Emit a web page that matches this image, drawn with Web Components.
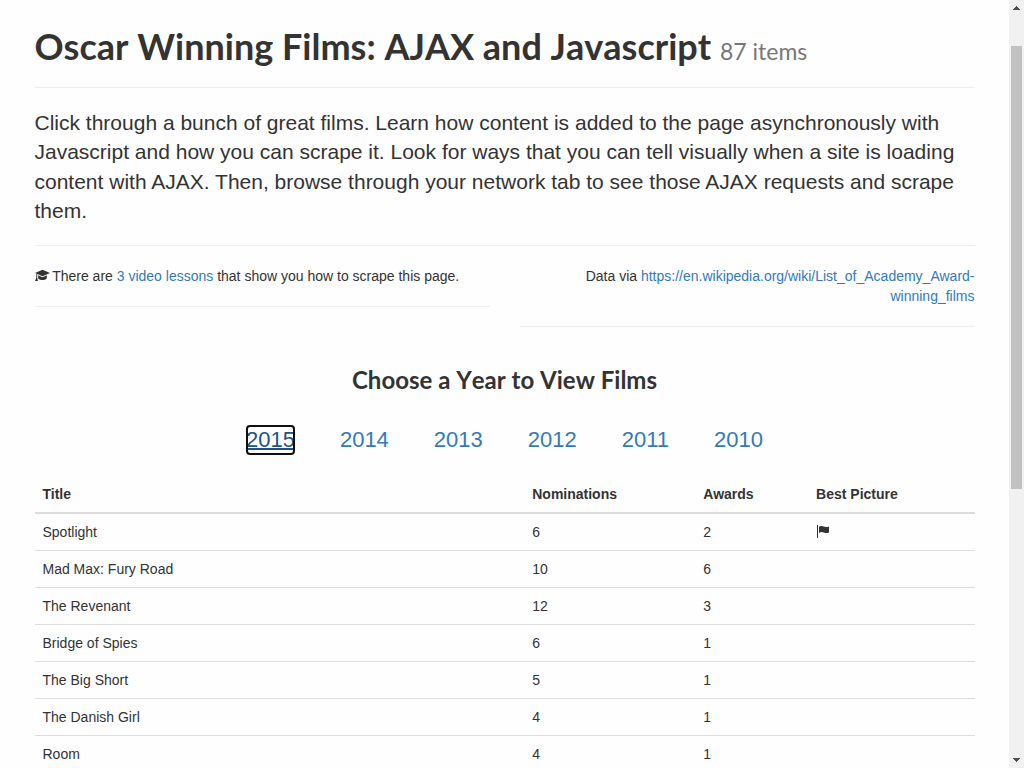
<!DOCTYPE html>
<html lang="en">
<head>
<meta charset="utf-8">
<title>Oscar Winning Films: AJAX and Javascript</title>
<style>
  body {
    margin: 0;
    background: #fefefe;
    color: #333;
    font: 14px/20px "Liberation Sans", Arial, sans-serif;
  }
</style>
</head>
<body>
<films-page></films-page>

<template id="films-page-template">
  <style>
    :host { display: flex; height: 100vh; overflow: hidden; }
    main { flex: 1; min-width: 0; overflow: hidden; }
    .container { max-width: 940px; margin: 0 auto; padding: 25px 15px 0; }
    .lead { margin: 20px 0 19px; font-size: 21px; line-height: 1.4; }
    hr { margin: 19px 0 20px; border: 0; border-top: 1px solid #eee; }
    .notes { display: grid; grid-template-columns: 1fr 1fr; gap: 30px; align-items: start; }
    a { color: #337ab7; text-decoration: none; }
    h3 {
      margin: 40px 0 10px;
      font: bold 24px/26px Lato, sans-serif;
      font-kerning: none;
      text-align: center;
    }
  </style>
  <main>
    <div class="container">
      <page-header>Oscar Winning Films: AJAX and Javascript <span slot="count">87 items</span></page-header>
      <p class="lead">Click through a bunch of great films. Learn how content is added to the page asynchronously with Javascript and how you can scrape it. Look for ways that you can tell visually when a site is loading content with AJAX. Then, browse through your network tab to see those AJAX requests and scrape them.</p>
      <hr>
      <div class="notes">
        <page-note><page-icon name="cap"></page-icon> There are <a href="#lessons">3 video lessons</a> that show you how to scrape this page.</page-note>
        <page-note align="right">Data via <a href="#source">https://en.wikipedia.org/wiki/List_of_Academy_Award-winning_films</a></page-note>
      </div>
      <h3>Choose a Year to View Films</h3>
      <year-picker></year-picker>
      <film-table></film-table>
    </div>
  </main>
  <scroll-bar></scroll-bar>
</template>

<template id="page-header-template">
  <style>
    :host { display: block; padding-bottom: 20px; border-bottom: 1px solid #eee; }
    h1 { margin: 0; font: bold 36px/42px Lato, sans-serif; font-kerning: none; }
    small { font-size: 23px; font-weight: 400; line-height: 1; color: #777; }
  </style>
  <h1><slot></slot><small><slot name="count"></slot></small></h1>
</template>

<template id="page-note-template">
  <style>
    :host { display: block; padding-bottom: 20px; border-bottom: 1px solid #eee; }
    :host([align="right"]) { text-align: right; }
    p { margin: 0; }
  </style>
  <p><slot></slot></p>
</template>

<template id="year-picker-template">
  <style>
    :host { display: block; padding: 22px 0 21px; }
    nav { display: flex; justify-content: center; gap: 45px; }
    a { font-size: 22px; line-height: 30px; color: #337ab7; text-decoration: none; }
    a[aria-current] {
      color: #23527c;
      text-decoration: underline 2px;
      outline: 2px solid #101010;
      outline-offset: -2px;
      border-radius: 4px;
    }
  </style>
  <nav aria-label="Year"></nav>
</template>

<template id="film-table-template">
  <style>
    :host { display: block; }
    table { width: 100%; table-layout: fixed; border-collapse: separate; border-spacing: 0; }
    .title { width: 52.1%; }
    .nominations { width: 18.2%; }
    .awards { width: 12%; }
    th, td { padding: 8px; text-align: left; border-bottom: 1px solid #ddd; }
    th { border-bottom-width: 2px; }
  </style>
  <table>
    <colgroup><col class="title"><col class="nominations"><col class="awards"><col></colgroup>
    <thead><tr><th>Title</th><th>Nominations</th><th>Awards</th><th>Best Picture</th></tr></thead>
    <tbody></tbody>
  </table>
</template>

<template id="scroll-bar-template">
  <style>
    :host { display: flex; flex-direction: column; width: 15px; background: #f1f1f1; }
    svg { display: block; width: 15px; height: 15px; fill: #505050; }
    .track { flex: 1; display: grid; grid-template-rows: 31fr 443fr 264fr; padding: 0 2px; }
    .thumb { grid-row: 2; background: #c1c1c1; }
  </style>
  <svg viewBox="0 0 15 15"><path d="M7 6h1v1h1v1h1v1h1v1H4V9h1V8h1V7h1z"/></svg>
  <div class="track"><div class="thumb"></div></div>
  <svg viewBox="0 0 15 15"><path d="M4 5h7v1h-1v1H9v1H8v1H7V8H6V7H5V6H4z"/></svg>
</template>

<script>
  const define = (name, setup) => customElements.define(name, class extends HTMLElement {
    constructor() {
      super();
      const root = this.attachShadow({ mode: 'open' });
      const template = document.getElementById(name + '-template');
      if (template) root.append(template.content.cloneNode(true));
    }
    connectedCallback() {
      if (setup) setup(this, this.shadowRoot);
    }
  });

  const icons = {
    cap: '<path d="M0 4 7.500.8 15 4 7.500 7.200z"/><path d="M3.200 6.300 7.500 8.200l4.300-1.900v3.200c-1.200 1-2.700 1.500-4.300 1.500s-3.100-.5-4.300-1.500z"/><path d="M1.300 5h.9v3.700l.8 3.300H0l1.300-3.300z"/>',
    flag: '<path d="M1 0h1v13H1z"/><path d="M3 1.700c1.800-1.300 3.300-.8 4.900-.1 1.600.7 3.100.6 5.100-.2v6c-2 1-3.500.8-5.100.1-1.600-.6-3.100-.8-4.900.5z"/>'
  };
  define('page-icon', (host, root) => {
    root.innerHTML = `<style>
      :host { display: inline-block; width: 14px; height: 14px; vertical-align: -2px; }
      svg { display: block; width: 100%; height: 100%; fill: currentColor; overflow: visible; }
    </style><svg viewBox="0 0 14 14" aria-hidden="true">${icons[host.getAttribute('name')]}</svg>`;
  });
  define('page-header');
  define('page-note');
  define('year-picker', (host, root) => {
    root.querySelector('nav').innerHTML = [2015, 2014, 2013, 2012, 2011, 2010]
      .map((year, i) => `<a href="#${year}"${i ? '' : ' aria-current="true"'}>${year}</a>`).join('');
  });
  const films = [
    ['Spotlight', 6, 2, true],
    ['Mad Max: Fury Road', 10, 6],
    ['The Revenant', 12, 3],
    ['Bridge of Spies', 6, 1],
    ['The Big Short', 5, 1],
    ['The Danish Girl', 4, 1],
    ['Room', 4, 1]
  ];
  define('film-table', (host, root) => {
    root.querySelector('tbody').innerHTML = films.map(([title, nominations, awards, best]) =>
      `<tr><td>${title}</td><td>${nominations}</td><td>${awards}</td><td>${best ? '<page-icon name="flag"></page-icon>' : ''}</td></tr>`).join('');
  });
  define('scroll-bar');
  define('films-page');
</script>
</body>
</html>
